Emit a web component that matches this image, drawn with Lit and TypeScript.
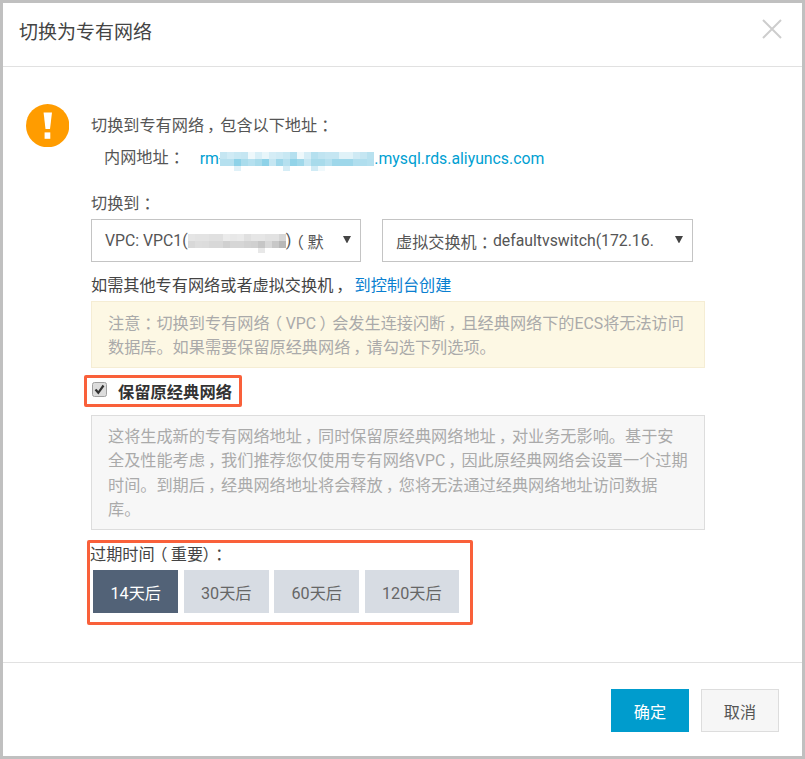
import { LitElement, html, css } from "lit";
import { customElement } from "lit/decorators.js";

const blueRows = [
  ["#c5e6f2", "#d0ebf5", "#c8e8f3", "#c5e6f2", "#eef8fb", "#d8eff7", "#e8f6fa", "#d5edf6", "#d0ebf5", "#c8e8f3", "#b5e0ef", "#eef8fb", "#d5edf6", "#b5e0ef", "#c0e4f1", "#c5e6f2", "#c5e6f2", "#e0f2f8", "#e0f2f8", "#cfeaf4", "#c5e6f2", "#b8e1ef"],
  ["#b5e0ef", "#b5e0ef", "#8ed2e8", "#aadcec", "#b5e0ef", "#a8dbeb", "#8ed2e8", "#c5e6f2", "#9ed7ea", "#b5e0ef", "#92d3e8", "#a0d8ea", "#c5e6f2", "#a8dbeb", "#a8dbeb", "#b5e0ef", "#9ed7ea", "#9ed7ea", "#9ed7ea", "#b0deee", "#b0deee", "#b5e0ef"],
  ["", "", "#dff1f8", "", "", "", "", "", "", "#d5edf6", "", "", "", "#d0ebf5", "#f0f9fc", "", "", "", "", "", "", ""],
];
const grayRows = [
  ["#e5e5e5", "#e3e3e3", "#e3e3e3", "#e0e0e0", "#e0e0e0", "#ebebeb", "#e8e8e8", "#eaeaea", "#e0e0e0", "#e6e6e6", "#e6e6e6", "#e2e2e2", "#e2e2e2", "#d6d6d6"],
  ["#d8d8d8", "#dddddd", "#dcdcdc", "#d8d8d8", "#d8d8d8", "#d0d0d0", "#d6d6d6", "#d6d6d6", "#d2d2d2", "#d0d0d0", "#c6c6c6", "#d8d8d8", "#c8c8c8", "#b8b8b8"],
  ["", "", "", "", "", "", "", "", "", "", "#e8e8e8", "", "", ""],
];

const noticeLines = [
  "注意：切换到专有网络（VPC）会发生连接闪断，且经典网络下的ECS将无法访问",
  "数据库。如果需要保留原经典网络，请勾选下列选项。",
];
const descLines = [
  "这将生成新的专有网络地址，同时保留原经典网络地址，对业务无影响。基于安",
  "全及性能考虑，我们推荐您仅使用专有网络VPC，因此原经典网络会设置一个过期",
  "时间。到期后，经典网络地址将会释放，您将无法通过经典网络地址访问数据",
  "库。",
];

/** Centres full-width punctuation in its em cell and sets Latin runs slightly smaller, as the reference font does. */
function t(text: string) {
  return text.split(/([，：（）]|[A-Za-z]+)/).map((s) => {
    if (/^[，：（）]$/.test(s)) return html`<span class="p">${s}</span>`;
    if (/^[A-Za-z]+$/.test(s)) return html`<span class="en">${s}</span>`;
    return s;
  });
}

@customElement("app-root")
export class AppRoot extends LitElement {
  static styles = css`
    :host { display: block; width: 805px; height: 759px; box-sizing: border-box; background: #c0c0c0; padding: 3px; font-family: Roboto, "Noto Sans CJK SC", sans-serif; font-size: 16.17px; color: #555; overflow: hidden; }
    .p { display: inline-block; width: 1em; text-align: center; font-feature-settings: "palt"; }
    .pw { font-feature-settings: "palt"; }
    .en { font-size: 15.8px; }
    .dialog { background: #fff; height: 753px; display: flex; flex-direction: column; }
    .head { height: 64px; flex: none; box-sizing: border-box; border-bottom: 1px solid #e1e1e1; display: flex; align-items: center; justify-content: space-between; padding: 0 20px 0 16px; }
    .title { font-size: 19px; color: #444; margin-bottom: 8px; }
    .close { width: 20px; height: 20px; display: block; margin-bottom: 12px; }
    .body { flex: 1; display: flex; padding: 36.5px 0 0 22.7px; gap: 22px; box-sizing: border-box; }
    .warn { width: 43.3px; height: 43.3px; flex: none; }
    .main { width: 614px; display: flex; flex-direction: column; align-items: flex-start; }
    .line { line-height: 24px; white-space: nowrap; }
    .l1 { margin-top: 10.5px; }
    .l2 { margin: 8px 0 0 13px; display: flex; }
    .link { color: #00a0d2; margin-left: 15px; display: flex; align-items: center; font-size: 15.8px; }
    .blur { display: flex; flex-direction: column; height: 19px; margin-top: 6px; }
    .link .blur { margin-left: -3px; }
    .row { display: flex; height: 7px; flex: none; }
    .row.last { height: 5px; }
    .cell { width: 7px; flex: none; }
    .l3 { margin-top: 21px; }
    .selects { display: flex; gap: 21px; margin-top: 3px; }
    .sel { height: 43px; box-sizing: border-box; border: 1px solid #c4c4c4; display: flex; align-items: center; padding: 0 9px 0 13px; justify-content: space-between; white-space: nowrap; }
    .sel.a { width: 270px; }
    .sel.b { width: 311px; }
    .sel .txt { display: flex; align-items: center; }
    .arrow { width: 8px; height: 7.5px; flex: none; margin-bottom: 2px; }
    .l4 { margin-top: 12px; color: #444; }
    .l4 a { color: #0a7fd0; text-decoration: none; margin-left: 5px; }
    .box { width: 614px; box-sizing: border-box; padding: 10px 16px; line-height: 24px; color: #aaa; }
    .ln { display: block; white-space: nowrap; }
    .notice { background: #fdf8e4; border: 1px solid #f5edd4; margin-top: 3px; height: 67px; }
    .mark { border: 3px solid #f9603a; border-radius: 2px; box-sizing: border-box; }
    .keep { margin: 7px 0 0 -7px; width: 158px; height: 32px; display: flex; align-items: center; padding-left: 5px; gap: 11px; }
    .cb { width: 15px; height: 15px; display: block; margin-top: -4px; flex: none; }
    .keep b { color: #333; font-weight: 700; font-size: 16.3px; white-space: nowrap; }
    .desc { background: #f7f7f7; border: 1px solid #ddd; margin-top: 8px; height: 115px; padding-top: 9px; line-height: 24.4px; }
    .expire { margin: 10px 0 0 -4px; width: 386px; height: 85px; padding-top: 1px; }
    .expire .line { line-height: 22px; color: #444; }
    .opts { display: flex; gap: 5.5px; margin: 4px 0 0 3.3px; }
    .opt { width: 85px; height: 43px; background: #d7dce3; color: #666; display: flex; align-items: center; justify-content: center; }
    .opt.on { background: #526277; color: #fff; }
    .opt.w { width: 94px; }
    .foot { height: 94px; flex: none; box-sizing: border-box; border-top: 1px solid #e1e1e1; display: flex; justify-content: flex-end; gap: 12px; padding: 26px 23px 0 0; }
    .btn { width: 78px; height: 43px; box-sizing: border-box; display: flex; align-items: center; justify-content: center; }
    .ok { background: #009ccd; color: #fff; }
    .no { background: #f6f6f6; border: 1px solid #ddd; color: #555; }
  `;

  private blur(rows: string[][]) {
    return html`<span class="blur">${rows.map(
      (r, i) => html`<span class="row ${i === 2 ? "last" : ""}">${r.map(
        (c) => html`<span class="cell" style="background:${c || "transparent"}"></span>`
      )}</span>`
    )}</span>`;
  }

  render() {
    const arrow = html`<svg class="arrow" viewBox="0 0 10 9" preserveAspectRatio="none"><path d="M0 0H10L5 9Z" fill="#444"/></svg>`;
    return html`
      <div class="dialog">
        <div class="head">
          <div class="title">切换为专有网络</div>
          <svg class="close" viewBox="0 0 20 20"><path d="M1 1 L19 19 M19 1 L1 19" stroke="#cdcdcd" stroke-width="2" fill="none"/></svg>
        </div>
        <div class="body">
          <svg class="warn" viewBox="0 0 43.3 43.3"><circle cx="21.65" cy="21.65" r="21.65" fill="#ff9c00"/><path d="M17.6 8.4 H26 L24 25 H19.5 Z" fill="#fff"/><rect x="18.6" y="28.4" width="5.7" height="6.4" fill="#fff"/></svg>
          <div class="main">
            <div class="line l1">${t("切换到专有网络，包含以下地址：")}</div>
            <div class="line l2"><span>${t("内网地址：")}</span><span class="link">rm-${this.blur(blueRows)}.mysql.rds.aliyuncs.com</span></div>
            <div class="line l3">${t("切换到：")}</div>
            <div class="selects">
              <div class="sel a"><span class="txt"><span class="en">VPC: VPC1(</span>${this.blur(grayRows)})<span class="p">（</span>默</span>${arrow}</div>
              <div class="sel b"><span class="txt"><span>${t("虚拟交换机：")}</span><span class="en">defaultvswitch(172.16.</span></span>${arrow}</div>
            </div>
            <div class="line l4">${t("如需其他专有网络或者虚拟交换机，")}<a>到控制台创建</a></div>
            <div class="box notice">${noticeLines.map((l) => html`<span class="ln">${t(l)}</span>`)}</div>
            <div class="keep mark">
              <svg class="cb" viewBox="0 0 15 15"><rect x=".5" y=".5" width="14" height="14" rx="2" fill="#dcdcdc" stroke="#a0a0a0"/><path d="M3.5 7.5 L6.3 10.8 L11.5 3.5" stroke="#333" stroke-width="2.2" fill="none"/></svg>
              <b>保留原经典网络</b>
            </div>
            <div class="box desc">${descLines.map((l) => html`<span class="ln">${t(l)}</span>`)}</div>
            <div class="expire mark">
              <div class="line">过期时间<span class="p">（</span>重要<span class="pw">）</span><span class="p">：</span></div>
              <div class="opts">
                <div class="opt on">14天后</div>
                <div class="opt">30天后</div>
                <div class="opt">60天后</div>
                <div class="opt w">120天后</div>
              </div>
            </div>
          </div>
        </div>
        <div class="foot">
          <div class="btn ok">确定</div>
          <div class="btn no">取消</div>
        </div>
      </div>
    `;
  }
}
